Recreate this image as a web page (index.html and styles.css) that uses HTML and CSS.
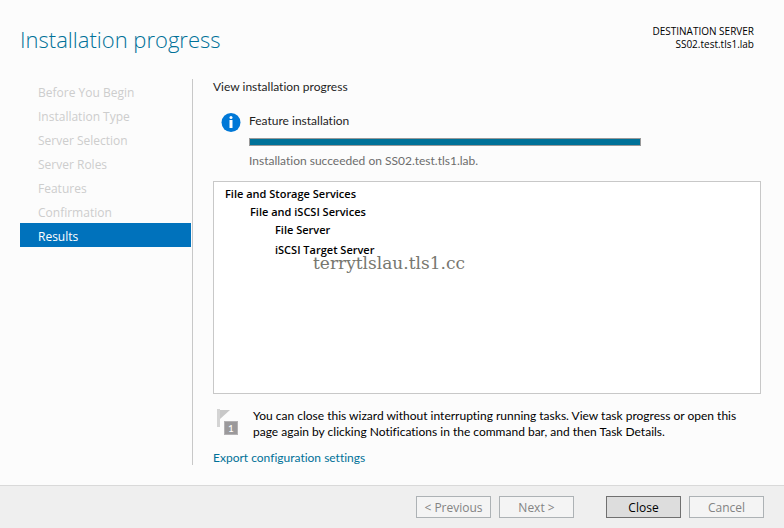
FILE: index.html
```html
<!DOCTYPE html>
<html lang="en">
<head>
    <meta charset="UTF-8">
    <meta name="viewport" content="width=device-width, initial-scale=1.0">
    <title>Add Roles and Features Wizard</title>
    <link rel="stylesheet" href="styles.css">
</head>
<body>
    <header class="header">
        <h1>Installation progress</h1>
        <div class="destination">
            <div>DESTINATION SERVER</div>
            <div class="server-name">SS02.test.tls1.lab</div>
        </div>
    </header>

    <div class="wizard">
        <nav class="steps">
            <ol>
                <li>Before You Begin</li>
                <li>Installation Type</li>
                <li>Server Selection</li>
                <li>Server Roles</li>
                <li>Features</li>
                <li>Confirmation</li>
                <li class="active" aria-current="step">Results</li>
            </ol>
        </nav>

        <main class="content">
            <h2>View installation progress</h2>

            <section class="status">
                <svg class="info-icon" width="20" height="20" viewBox="0 0 20 20" aria-hidden="true">
                    <circle cx="10" cy="9.5" r="9.5" fill="#0078d7"/>
                    <circle cx="10" cy="4.6" r="1.5" fill="#fff"/>
                    <rect x="8.5" y="7" width="3" height="8" fill="#fff"/>
                </svg>
                <div class="status-body">
                    <label for="installProgress">Feature installation</label>
                    <progress id="installProgress" value="100" max="100"></progress>
                    <p>Installation succeeded on SS02.test.tls1.lab.</p>
                </div>
            </section>

            <div class="results">
                <ul class="features">
                    <li>File and Storage Services
                        <ul>
                            <li>File and iSCSI Services
                                <ul class="roles">
                                    <li>File Server</li>
                                    <li>iSCSI Target Server</li>
                                </ul>
                            </li>
                        </ul>
                    </li>
                </ul>
                <span class="watermark">terrytlslau.tls1.cc</span>
            </div>

            <div class="notice">
                <svg class="flag-icon" width="22" height="28" viewBox="0 0 22 28" aria-hidden="true">
                    <rect x="0" y="1" width="3" height="18" fill="#d4d4d4"/>
                    <path d="M3 2h10L3 11z" fill="#c8c8c8"/>
                    <rect x="7.5" y="13.5" width="13" height="13" fill="#9b999b" stroke="#b4b2b4"/>
                    <text x="14" y="24" class="flag-count">1</text>
                </svg>
                <p>You can close this wizard without interrupting running tasks. View task progress or open this page again by clicking Notifications in the command bar, and then Task Details.</p>
            </div>

            <a class="export" href="#">Export configuration settings</a>
        </main>
    </div>

    <footer class="footer">
        <div class="button-group">
            <button type="button" disabled>&lt; Previous</button>
            <button type="button" disabled>Next &gt;</button>
        </div>
        <div class="button-group">
            <button type="button" class="primary">Close</button>
            <button type="button" disabled>Cancel</button>
        </div>
    </footer>
</body>
</html>
```
FILE: styles.css
```css
* {
    box-sizing: border-box;
}

body {
    font-family: "Open Sans", "Noto Sans", sans-serif;
    font-size: 12px;
    line-height: 16px;
    background-color: #fcfcfc;
    color: #1e1e1e;
    margin: 0;
    min-height: 100vh;
    display: flex;
    flex-direction: column;
}

h1, h2, p, ol, ul {
    margin: 0;
    padding: 0;
}

ol, ul {
    list-style: none;
}

.header {
    display: flex;
    justify-content: space-between;
    padding: 23px 30px 24px 20px;
}

.header h1 {
    font-size: 22px;
    font-weight: 300;
    line-height: 32px;
    color: #007198;
}

.destination {
    padding-top: 2px;
    font-size: 10px;
    line-height: 13px;
    text-align: right;
    color: #000;
}

.wizard {
    flex: 1;
    display: flex;
    padding: 0 23px 20px 20px;
}

.steps {
    flex: 0 0 173px;
    border-right: 1px solid #c8c8c8;
    padding-right: 1px;
}

.steps li {
    line-height: 20px;
    padding: 4px 0 0 18px;
    color: #cdcdcd;
}

.steps .active {
    background-color: #0072bc;
    color: #fff;
}

.content {
    flex: 1;
    display: flex;
    flex-direction: column;
    padding-left: 20px;
    font-family: Lato, "Open Sans", sans-serif;
    font-variant-ligatures: none;
}

.content h2 {
    font-size: 12px;
    font-weight: normal;
    line-height: 16px;
}

.status {
    display: flex;
    gap: 8px;
    padding: 18px 120px 12px 8px;
}

.status-body {
    flex: 1;
}

.status-body label {
    display: block;
}

.status-body progress {
    appearance: none;
    display: block;
    width: 100%;
    height: 8px;
    margin: 9px 0 7px;
    border: 1px solid #999;
    background-color: #e6e6e6;
}

.status-body progress::-webkit-progress-bar {
    background-color: #e6e6e6;
}

.status-body progress::-webkit-progress-value {
    background-color: #007198;
}

.status-body p {
    color: #6d6d6d;
}

.results {
    position: relative;
    flex: 1;
    padding: 3px 11px;
    border: 1px solid #c8c8c8;
    background-color: #fff;
    color: #000;
}

.features {
    font-family: "Open Sans", "Noto Sans", sans-serif;
    font-size: 11px;
    font-weight: 600;
    line-height: 18px;
}

.features ul {
    padding-left: 25px;
}

.roles {
    display: grid;
    gap: 2px;
}

/* Overlaps the last role in the list */
.watermark {
    position: absolute;
    top: 70px;
    left: 99px;
    font-family: "DejaVu Serif", serif;
    font-size: 17px;
    line-height: 22px;
    color: #77776f;
}

.notice {
    display: flex;
    gap: 14px;
    padding: 14px 16px 11px 4px;
    color: #000;
}

.flag-icon {
    flex: none;
}

.flag-count {
    fill: #fff;
    font-size: 10px;
    text-anchor: middle;
}

.export {
    align-self: flex-start;
    line-height: 14px;
    color: #007198;
    text-decoration: none;
}

.footer {
    display: flex;
    justify-content: flex-end;
    gap: 32px;
    padding: 10px 20px;
    border-top: 1px solid #d9d9d9;
    background-color: #efefef;
}

.button-group {
    display: flex;
    gap: 8px;
}

.footer button {
    width: 75px;
    height: 22px;
    padding: 0;
    border: 1px solid #adb2b5;
    background-color: #f4f4f4;
    color: #838383;
    font-family: inherit;
    font-size: 12px;
}

.footer .primary {
    border-color: #707070;
    background-color: #ddd;
    color: #000;
}
```
